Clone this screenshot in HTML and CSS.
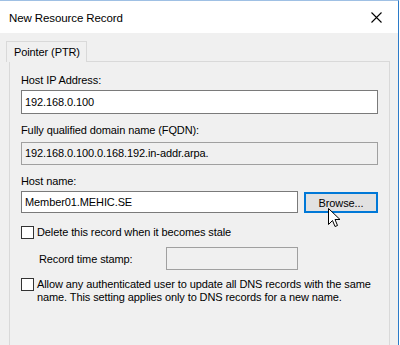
FILE: index.html
```html
<!doctype html>
<html lang="en">
  <head>
    <title>New Resource Record</title>
    <link rel="stylesheet" href="styles.css">
  </head>
  <body>
    <div class="window">
      <div class="titlebar">
        <span class="title">New Resource Record</span>
        <svg class="close" width="11" height="11" viewBox="0 0 11 11">
          <path d="M0.5 0.5 L10.5 10.5 M10.5 0.5 L0.5 10.5" stroke="#000" stroke-width="1.1" fill="none"/>
        </svg>
      </div>
      <div class="client">
        <div class="tab">Pointer (PTR)</div>
        <div class="panel">
          <div class="label first">Host IP Address:</div>
          <div class="field edit ip">192.168.0.100</div>

          <div class="label fqdn">Fully qualified domain name (FQDN):</div>
          <div class="field readonly">192.168.0.100.0.168.192.in-addr.arpa.</div>

          <div class="label host">Host name:</div>
          <div class="host-row">
            <div class="field edit hostname">Member01.MEHIC.SE</div>
            <button class="browse" type="button">Browse...</button>
            <svg class="cursor" width="13" height="20" viewBox="0 0 13 20">
              <path d="M0.5 0.5 L0.5 16.5 L4.5 12.5 L7 18.5 L9.5 17.5 L7 11.5 L12 11.5 Z" fill="#fff" stroke="#000" stroke-width="1" stroke-linejoin="miter"/>
            </svg>
          </div>

          <label class="check stale">
            <span class="box"></span>
            <span>Delete this record when it becomes stale</span>
          </label>

          <div class="stamp-row">
            <span class="stamp-label">Record time stamp:</span>
            <div class="field readonly stamp"></div>
          </div>

          <label class="check allow">
            <span class="box"></span>
            <span>Allow any authenticated user to update all DNS records with the same name. This setting applies only to DNS records for a new name.</span>
          </label>
        </div>
      </div>
    </div>
  </body>
</html>
```

FILE: styles.css
```css
body {
  margin: 0;
  background: #fff;
  font-family: "Liberation Sans", Arial, sans-serif;
  font-size: 11px;
  letter-spacing: -0.1px;
  color: #000;
}

.window {
  width: 399px;
  height: 345px;
  border-right: 1px solid #2b7bc9;
  border-top: 1px solid #9fc0e4;
  box-sizing: border-box;
  display: flex;
  flex-direction: column;
  overflow: hidden;
}

.titlebar {
  height: 32px;
  background: #fff;
  display: flex;
  align-items: center;
  justify-content: space-between;
  padding: 0 16px 0 9px;
  flex-shrink: 0;
}

.title {
  font-size: 11.5px;
  margin-top: 1px;
}

.close {
  display: block;
}

.client {
  flex: 1;
  background: #f0f0f0;
  padding: 8px 0 0 9px;
}

.tab {
  display: inline-block;
  position: relative;
  z-index: 1;
  margin-left: -3px;
  margin-bottom: -1px;
  height: 20px;
  line-height: 20px;
  padding: 0 6px 0 7px;
  white-space: nowrap;
  background: #f0f0f0;
  border: 1px solid #d9d9d9;
  border-bottom: none;
}

.panel {
  width: 381px;
  height: 300px;
  box-sizing: border-box;
  border: 1px solid #d9d9d9;
  padding: 0 11px;
}

.label {
  line-height: 15px;
}

.label.first {
  margin-top: 11px;
  margin-bottom: 2px;
}

.label.fqdn {
  margin-top: 9px;
  margin-bottom: 4px;
}

.label.host {
  margin-top: 9px;
  margin-bottom: 2px;
}

.field {
  box-sizing: border-box;
  border: 1px solid #7a7a7a;
  background: #fff;
  padding: 0 3px;
  white-space: nowrap;
}

.field.ip {
  height: 24px;
  line-height: 22px;
}

.field.readonly {
  height: 23px;
  line-height: 21px;
  background: #f0f0f0;
  border-color: #a0a0a0;
}

.host-row {
  display: flex;
  align-items: flex-start;
  gap: 6px;
  position: relative;
}

.field.hostname {
  width: 277px;
  height: 22px;
  line-height: 20px;
}

.browse {
  width: 74px;
  height: 21px;
  margin-top: 1px;
  padding: 0;
  border: 2px solid #0078d7;
  background: #e1e1e1;
  font-family: inherit;
  font-size: 11px;
  letter-spacing: -0.1px;
  color: #000;
}

.cursor {
  position: absolute;
  left: 307px;
  top: 17px;
}

.check {
  display: flex;
  align-items: flex-start;
  gap: 3px;
  line-height: 13px;
}

.box {
  width: 13px;
  height: 13px;
  box-sizing: border-box;
  border: 1px solid #333;
  background: #fff;
  flex-shrink: 0;
}

.check.stale {
  margin-top: 13px;
}

.check.allow {
  margin-top: 8px;
}

.stamp-row {
  display: flex;
  align-items: center;
  margin-top: 8px;
  padding-left: 18px;
}

.stamp-label {
  width: 127px;
}

.field.stamp {
  width: 132px;
}
```
